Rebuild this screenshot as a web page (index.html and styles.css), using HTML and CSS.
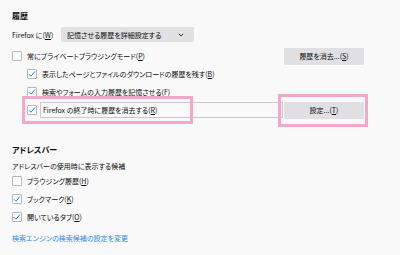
FILE: index.html
```html
<!DOCTYPE html>
<html lang="ja">
<head>
<meta charset="utf-8">
<link rel="stylesheet" href="styles.css">
</head>
<body>
<main class="page">
  <h2 class="heading">履歴</h2>
  <div class="mode-row">
    <span class="mode-label">Firefox に(<u>W</u>)</span>
    <div class="select">
      <span class="select-text">記憶させる履歴を詳細設定する</span>
      <svg class="chevron" width="6" height="4" viewBox="0 0 6 4"><path d="M0.8 0.8 L3 3 L5.2 0.8" fill="none" stroke="#333" stroke-width="1"/></svg>
    </div>
  </div>

  <div class="history">
    <div class="row">
      <span class="box"></span>
      <span class="label">常にプライベートブラウジングモード(<u>P</u>)</span>
      <span class="btn">履歴を消去...(<u>S</u>)</span>
    </div>
    <div class="row indent">
      <span class="box"><svg width="10" height="10" viewBox="0 0 10 10"><path d="M2 5.2 L4 7.2 L8 2.4" fill="none" stroke="#0a84ff" stroke-width="1"/></svg></span>
      <span class="label">表示したページとファイルのダウンロードの履歴を残す(<u>B</u>)</span>
    </div>
    <div class="row indent">
      <span class="box"><svg width="10" height="10" viewBox="0 0 10 10"><path d="M2 5.2 L4 7.2 L8 2.4" fill="none" stroke="#0a84ff" stroke-width="1"/></svg></span>
      <span class="label">検索やフォームの入力履歴を記憶させる(<u>F</u>)</span>
    </div>
    <div class="row indent highlight-row">
      <span class="box"><svg width="10" height="10" viewBox="0 0 10 10"><path d="M2 5.2 L4 7.2 L8 2.4" fill="none" stroke="#0a84ff" stroke-width="1"/></svg></span>
      <span class="label framed">Firefox の終了時に履歴を消去する(<u>R</u>)</span>
      <span class="btn">設定...(<u>T</u>)</span>
      <span class="mark mark-left"></span>
      <span class="mark mark-right"></span>
    </div>
  </div>

  <h2 class="heading heading-bar">アドレスバー</h2>
  <p class="sub">アドレスバーの使用時に表示する候補</p>
  <div class="row">
    <span class="box"></span>
    <span class="label">ブラウジング履歴(<u>H</u>)</span>
  </div>
  <div class="row">
    <span class="box"><svg width="10" height="10" viewBox="0 0 10 10"><path d="M2 5.2 L4 7.2 L8 2.4" fill="none" stroke="#0a84ff" stroke-width="1"/></svg></span>
    <span class="label">ブックマーク(<u>K</u>)</span>
  </div>
  <div class="row">
    <span class="box"><svg width="10" height="10" viewBox="0 0 10 10"><path d="M2 5.2 L4 7.2 L8 2.4" fill="none" stroke="#0a84ff" stroke-width="1"/></svg></span>
    <span class="label">開いているタブ(<u>O</u>)</span>
  </div>
  <a class="link">検索エンジンの検索候補の設定を変更</a>
</main>
</body>
</html>
```

FILE: styles.css
```css
html, body {
  margin: 0;
  padding: 0;
  background: #f9f9fa;
}
body {
  width: 400px;
  height: 255px;
  overflow: hidden;
  font-family: "Noto Sans CJK JP", "Noto Sans", sans-serif;
  font-feature-settings: "palt";
  font-size: 7px;
  color: #0c0c0d;
}
.page {
  padding: 10px 0 0 12px;
  width: 352px;
}
u {
  text-decoration: underline;
  text-underline-offset: 1px;
}
.heading {
  margin: 0;
  height: 12px;
  line-height: 12px;
  font-size: 8px;
  font-weight: 700;
}
.mode-row {
  display: flex;
  align-items: center;
  margin-top: 5px;
  height: 15px;
}
.mode-label {
  width: 49px;
}
.select {
  display: flex;
  align-items: center;
  justify-content: space-between;
  width: 133px;
  height: 15px;
  box-sizing: border-box;
  padding: 0 10px 0 6px;
  background: #e1e1e3;
  border-radius: 1px;
}
.history {
  margin-top: 5px;
}
.row {
  display: flex;
  align-items: center;
  height: 18px;
}
.indent {
  padding-left: 15px;
}
.box {
  flex: none;
  width: 10px;
  height: 10px;
  box-sizing: border-box;
  border: 1px solid #b8b8ba;
  background: #fff;
  border-radius: 1px;
  position: relative;
}
.box svg {
  position: absolute;
  left: -1px;
  top: -1px;
}
.label {
  margin-left: 5px;
  white-space: nowrap;
}
.btn {
  margin-left: auto;
  flex: none;
  width: 80px;
  height: 17px;
  line-height: 17px;
  text-align: center;
  background: #e0e0e2;
  border-radius: 1px;
}
.highlight-row {
  position: relative;
}
.framed {
  flex: 1;
  margin-left: 3px;
  margin-right: 1px;
  height: 16px;
  line-height: 14px;
  box-sizing: border-box;
  border: 1px solid #c9c9cb;
  padding-left: 2px;
}
.mark {
  position: absolute;
  box-sizing: border-box;
  border: 3px solid #f4a7c8;
}
.mark-left {
  left: 10px;
  top: -5px;
  width: 171px;
  height: 28px;
}
.mark-right {
  left: 266px;
  top: -7px;
  width: 90px;
  height: 33px;
}
.heading-bar {
  margin-top: 25px;
}
.sub {
  margin: 4px 0 0;
  height: 12px;
  line-height: 12px;
}
.link {
  display: block;
  margin-top: 6px;
  height: 12px;
  line-height: 12px;
  color: #2f8ae4;
}
```
